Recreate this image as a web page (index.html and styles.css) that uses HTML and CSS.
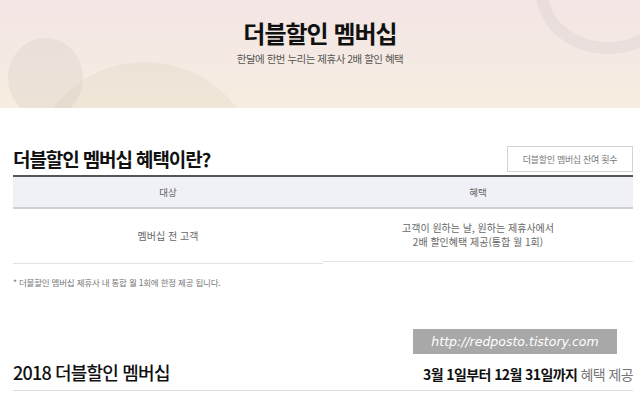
FILE: index.html
```html
<!DOCTYPE html>
<html lang="ko">
<head>
  <meta charset="utf-8">
  <title>더블할인 멤버십</title>
  <link rel="stylesheet" href="styles.css">
</head>
<body>
  <div class="hero">
    <span class="deco deco-big"></span>
    <span class="deco deco-dots"></span>
    <span class="deco deco-ring"></span>
    <h1>더블할인 멤버십</h1>
    <p>한달에 한번 누리는 제휴사 2배 할인 혜택</p>
  </div>

  <div class="section">
    <div class="section-head">
      <h2>더블할인 멤버십 혜택이란?</h2>
      <button class="count-btn">더블할인 멤버십 잔여 횟수</button>
    </div>

    <div class="benefit">
      <div class="benefit-th">
        <div class="th left">대상</div>
        <div class="th right">혜택</div>
      </div>
      <div class="benefit-row">
        <div class="td left">멤버십 전 고객</div>
        <div class="td right">고객이 원하는 날, 원하는 제휴사에서<br>2배 할인혜택 제공(통합 월 1회)</div>
      </div>
    </div>

    <p class="note">* 더블할인 멤버십 제휴사 내 통합 월 1회에 한정 제공 됩니다.</p>
  </div>

  <div class="section year">
    <div class="watermark">http://redposto.tistory.com</div>
    <div class="year-head">
      <h2>2018 더블할인 멤버십</h2>
      <div class="period"><b>3월 1일부터 12월 31일까지</b> 혜택 제공</div>
    </div>
  </div>
</body>
</html>
```

FILE: styles.css
```css
body {
  margin: 0;
  font-family: "Noto Sans CJK KR", "Noto Sans", sans-serif;
  background-color: #ffffff;
  color: #111111;
}

.hero {
  position: relative;
  height: 108px;
  overflow: hidden;
  background: linear-gradient(#f3e5e5, #f6eee0);
  text-align: center;
}

.hero h1 {
  position: relative;
  margin: 0;
  padding-top: 18px;
  font-size: 24px;
  line-height: 30px;
  letter-spacing: -1px;
  font-weight: 700;
  color: #111111;
}

.hero p {
  position: relative;
  margin: 3px 0 0;
  font-size: 10.5px;
  line-height: 16px;
  letter-spacing: -0.5px;
  color: #555555;
}

.deco {
  position: absolute;
  border-radius: 50%;
}

.deco-big {
  left: 30px;
  top: 62px;
  width: 230px;
  height: 230px;
  background-color: rgba(200, 190, 170, 0.16);
}

.deco-dots {
  left: 8px;
  top: 38px;
  width: 75px;
  height: 80px;
  background-color: rgba(210, 200, 190, 0.28);
}

.deco-ring {
  right: -40px;
  top: -70px;
  width: 120px;
  height: 100px;
  border: 12px solid rgba(215, 205, 205, 0.35);
}

.section {
  padding: 0 7px 0 13px;
}

.section-head {
  display: flex;
  justify-content: space-between;
  align-items: center;
  margin-top: 38px;
  padding-bottom: 3px;
}

.section-head h2 {
  margin: 0;
  font-size: 19px;
  line-height: 24px;
  letter-spacing: -1.1px;
  font-weight: 700;
}

.count-btn {
  width: 126px;
  height: 26px;
  padding: 0;
  border: 1px solid #d4d4d4;
  background-color: #ffffff;
  font-family: inherit;
  font-size: 9px;
  letter-spacing: -0.3px;
  color: #777777;
}

.benefit {
  border-top: 2px solid #555555;
}

.benefit-th {
  display: flex;
  background-color: #f0f0f7;
  border-bottom: 2px solid #cfcfd4;
}

.th {
  flex: 1;
  height: 30px;
  line-height: 30px;
  text-align: center;
  font-size: 9.5px;
  color: #666666;
}

.benefit-row {
  display: flex;
  align-items: flex-start;
}

.td {
  flex: 1;
  display: flex;
  align-items: center;
  justify-content: center;
  text-align: center;
  font-size: 10px;
  line-height: 14px;
  color: #666666;
  border-bottom: 1px solid #e2e2e2;
}

.td.left {
  height: 54px;
}

.td.right {
  height: 52px;
}

.note {
  margin: 12px 0 0;
  font-size: 8.5px;
  letter-spacing: -0.2px;
  color: #777777;
}

.year {
  position: relative;
  margin-top: 41px;
}

.watermark {
  position: absolute;
  right: 23px;
  top: 0;
  width: 204px;
  height: 25px;
  line-height: 25px;
  background-color: #a8a8a8;
  color: #ffffff;
  font-family: "DejaVu Sans", sans-serif;
  font-style: italic;
  font-size: 12.5px;
  text-align: center;
}

.year-head {
  display: flex;
  justify-content: space-between;
  align-items: flex-end;
  padding-top: 31px;
  padding-bottom: 6px;
  border-bottom: 1px solid #dddddd;
}

.year-head h2 {
  margin: 0;
  font-size: 18px;
  line-height: 24px;
  letter-spacing: -0.8px;
  font-weight: 500;
}

.period {
  font-size: 14px;
  letter-spacing: -0.6px;
  color: #777777;
}

.period b {
  color: #111111;
  font-weight: 700;
}
```
